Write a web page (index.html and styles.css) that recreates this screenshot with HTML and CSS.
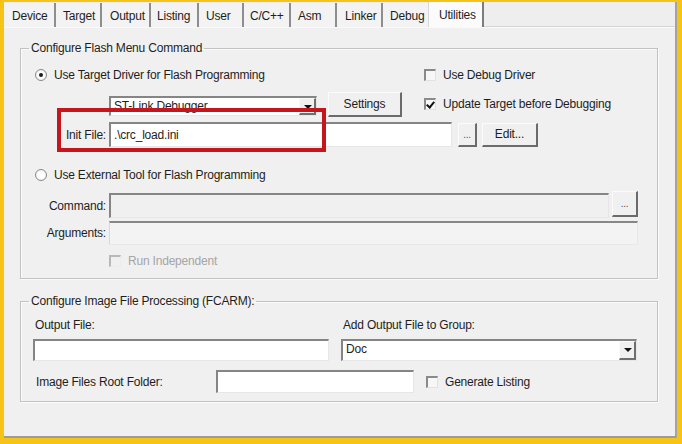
FILE: index.html
```html
<!DOCTYPE html>
<html lang="en">
  <head>
    <meta charset="UTF-8" />
    <title>Options for Target - Utilities</title>
    <link rel="stylesheet" href="styles.css">
  </head>
  <body>
    <div class="window">
      <!-- Tab strip -->
      <div class="tabs">
        <div class="tab">Device</div>
        <div class="tab">Target</div>
        <div class="tab">Output</div>
        <div class="tab">Listing</div>
        <div class="tab">User</div>
        <div class="tab">C/C++</div>
        <div class="tab">Asm</div>
        <div class="tab">Linker</div>
        <div class="tab">Debug</div>
        <div class="tab active">Utilities</div>
      </div>

      <div class="panel">
        <!-- Flash menu command group -->
        <fieldset class="group group-flash">
          <legend>Configure Flash Menu Command</legend>

          <div class="row row-1">
            <label class="radio-line">
              <span class="radio checked"></span>
              Use Target Driver for Flash Programming
            </label>
            <label class="check-line">
              <span class="checkbox"></span>
              Use Debug Driver
            </label>
          </div>

          <div class="row row-2">
            <div class="select select-driver">
              <span class="select-text">ST-Link Debugger</span>
              <span class="select-arrow"></span>
            </div>
            <button class="btn btn-settings">Settings</button>
            <label class="check-line">
              <span class="checkbox checked"></span>
              Update Target before Debugging
            </label>
          </div>

          <div class="row row-3">
            <span class="field-label">Init File:</span>
            <div class="edit edit-init">.\crc_load.ini</div>
            <button class="btn btn-dots">...</button>
            <button class="btn btn-edit">Edit...</button>
          </div>

          <div class="row row-4">
            <label class="radio-line">
              <span class="radio"></span>
              Use External Tool for Flash Programming
            </label>
          </div>

          <div class="row row-5">
            <span class="field-label">Command:</span>
            <div class="edit edit-command"></div>
            <button class="btn btn-dots btn-dots-wide">...</button>
          </div>

          <div class="row row-6">
            <span class="field-label">Arguments:</span>
            <div class="edit edit-args"></div>
          </div>

          <div class="row row-7">
            <label class="check-line disabled">
              <span class="checkbox"></span>
              Run Independent
            </label>
          </div>

          <!-- annotation box drawn over the driver/init file controls -->
          <div class="highlight"></div>
        </fieldset>

        <!-- Image file processing group -->
        <fieldset class="group group-image">
          <legend>Configure Image File Processing (FCARM):</legend>

          <div class="image-grid">
            <span class="grid-label">Output File:</span>
            <span class="grid-label">Add Output File to Group:</span>
            <div class="edit edit-output"></div>
            <div class="select select-group">
              <span class="select-text">Doc</span>
              <span class="select-arrow"></span>
            </div>
          </div>

          <div class="row row-root">
            <span class="root-label">Image Files Root Folder:</span>
            <div class="edit edit-root"></div>
            <label class="check-line">
              <span class="checkbox"></span>
              Generate Listing
            </label>
          </div>
        </fieldset>
      </div>
    </div>
  </body>
</html>
```

FILE: styles.css
```css
/* Reset */
* {
  box-sizing: border-box;
  margin: 0;
  padding: 0;
}
html,
body {
  height: 100%;
}
body {
  background: #f5c417;
  font-family: "Liberation Sans", Arial, sans-serif;
  font-size: 12px;
  letter-spacing: -0.2px;
  color: #1e1e1e;
  overflow: hidden;
}
/* Dialog page */
.window {
  margin: 2px 5px 0 4px;
  height: 436px;
  background: #f0f0f0;
  border-right: 2px solid #a3a3a3;
  border-bottom: 2px solid #9c9c9c;
  display: flex;
  flex-direction: column;
}
/* Tabs */
.tabs {
  display: flex;
  height: 25px;
  background: #eeeeee;
  border-bottom: 1px solid #d4d4d4;
  box-shadow: 0 1px 0 #fafafa;
}
.tab {
  height: 24px;
  margin-top: 1px;
  padding: 6px 0 0 7px;
  border-right: 2px solid #8e8e8e;
  background: #f3f3f3;
  white-space: nowrap;
}
.tab:nth-child(1) { width: 52px; padding-left: 8px; }
.tab:nth-child(2) { width: 46px; }
.tab:nth-child(3) { width: 49px; padding-left: 8px; }
.tab:nth-child(4) { width: 48px; padding-left: 6px; }
.tab:nth-child(5) { width: 45px; }
.tab:nth-child(6) { width: 47px; padding-left: 6px; }
.tab:nth-child(7) { width: 46px; }
.tab:nth-child(8) { width: 46px; padding-left: 8px; }
.tab:nth-child(9) { width: 45px; border-right: none; }
.tab.active {
  width: 56px;
  height: 25px;
  margin-top: 0;
  padding-left: 10px;
  background: #fbfbfb;
  border-left: 1px solid #d8d8d8;
  border-right: 2px solid #7c7c7c;
}
/* Tab panel */
.panel {
  flex: 1;
  padding: 0 0 0 16px;
}
.group {
  width: 638px;
  border: 1px solid #c2c2c2;
  box-shadow: inset 1px 1px 0 #fbfbfb, 1px 1px 0 #fbfbfb;
}
.group legend {
  margin-left: 8px;
  padding: 0 2px;
  line-height: 14px;
}
.group-flash {
  position: relative;
  margin-top: 14px;
  padding-bottom: 7px;
}
.group-image {
  margin-top: 15px;
  padding: 0 0 8px 0;
}
.row {
  display: flex;
  align-items: center;
}
.row-1 {
  height: 20px;
  margin-top: 10px;
  padding-left: 14px;
}
.row-1 .radio-line {
  width: 389px;
}
.row-2 {
  height: 26px;
  margin-top: 6px;
  padding-left: 88px;
}
.row-3 {
  height: 25px;
  margin-top: 5px;
}
.row-4 {
  height: 20px;
  margin-top: 18px;
  padding-left: 14px;
}
.row-5 {
  height: 27px;
  margin-top: 6px;
  align-items: flex-start;
}
.row-5 .field-label {
  margin-top: 8px;
}
.row-6 {
  height: 24px;
  margin-top: 3px;
}
.row-7 {
  height: 20px;
  margin-top: 6px;
  padding-left: 88px;
}
.field-label {
  width: 88px;
  text-align: right;
  padding-right: 3px;
  flex-shrink: 0;
}
/* Radio and check boxes */
.radio-line,
.check-line {
  display: flex;
  align-items: center;
  gap: 7px;
  white-space: nowrap;
}
.radio {
  width: 12px;
  height: 12px;
  border-radius: 50%;
  border: 1px solid #8a8a8a;
  background: radial-gradient(circle, #ffffff 40%, #e6e6e6 100%);
  position: relative;
  flex-shrink: 0;
}
.radio.checked::after {
  content: "";
  position: absolute;
  left: 3px;
  top: 3px;
  width: 4px;
  height: 4px;
  border-radius: 50%;
  background: #1c1c1c;
}
.checkbox {
  width: 12px;
  height: 12px;
  border-style: solid;
  border-width: 2px 1px 1px 2px;
  border-color: #8a8a8a #e2e2e2 #e2e2e2 #8a8a8a;
  background: #f7f7f7;
  position: relative;
  flex-shrink: 0;
}
.checkbox.checked::after {
  content: "";
  position: absolute;
  left: 2px;
  top: 0;
  width: 3px;
  height: 6px;
  border-right: 2px solid #111;
  border-bottom: 2px solid #111;
  transform: rotate(40deg);
}
.check-line.disabled {
  color: #a5a5a5;
}
.check-line.disabled .checkbox {
  border-color: #b8b8b8 #ececec #ececec #b8b8b8;
  background: #f0f0f0;
}
/* Edit fields */
.edit {
  height: 23px;
  background: #fff;
  border-style: solid;
  border-width: 2px 1px 1px 2px;
  border-color: #858585 #e6e6e6 #e6e6e6 #858585;
  padding: 3px 0 0 3px;
  white-space: nowrap;
}
.edit-init {
  width: 343px;
  height: 25px;
  padding-top: 4px;
}
.edit-command {
  width: 500px;
  height: 25px;
  margin-top: 2px;
  background: #f0f0f0;
}
.edit-args {
  width: 529px;
  height: 24px;
  background: #f3f3f3;
  border-color: #878787 #e8e8e8 #e8e8e8 #d9d9d9;
  border-width: 2px 1px 1px 1px;
}
.edit-output {
  height: 22px;
}
.edit-root {
  width: 198px;
  height: 23px;
}
/* Drop-down lists */
.select {
  display: flex;
  height: 20px;
  background: #fff;
  border-style: solid;
  border-width: 2px 1px 1px 2px;
  border-color: #858585 #e6e6e6 #e6e6e6 #858585;
}
.select-text {
  flex: 1;
  padding: 1px 0 0 3px;
}
.select-arrow {
  width: 17px;
  background: #f0f0f0;
  border-style: solid;
  border-width: 1px 2px 2px 1px;
  border-color: #fafafa #6f6f6f #6f6f6f #fafafa;
  position: relative;
}
.select-arrow::after {
  content: "";
  position: absolute;
  left: 4px;
  top: 6px;
  border-left: 4px solid transparent;
  border-right: 4px solid transparent;
  border-top: 4px solid #111;
}
.select-driver {
  width: 208px;
  margin-top: 3px;
}
.select-group {
  height: 22px;
}
/* Buttons */
.btn {
  font-family: inherit;
  font-size: 12px;
  letter-spacing: -0.2px;
  color: #1e1e1e;
  background: #f0f0f0;
  border-style: solid;
  border-width: 1px 2px 2px 1px;
  border-color: #fbfbfb #6b6b6b #6b6b6b #fbfbfb;
  flex-shrink: 0;
}
.btn-settings {
  width: 74px;
  height: 25px;
  margin: 0 22px 0 11px;
}
.btn-dots {
  width: 19px;
  height: 24px;
  margin-left: 6px;
  font-size: 10px;
  color: #555;
}
.btn-dots-wide {
  width: 26px;
  height: 26px;
  margin-left: 3px;
}
.btn-edit {
  width: 56px;
  height: 24px;
  margin-left: 5px;
}
/* Red annotation frame */
.highlight {
  position: absolute;
  left: 36px;
  top: 53px;
  width: 269px;
  height: 44px;
  border: 4px solid #c4161c;
  pointer-events: none;
}
/* Image file group */
.image-grid {
  display: grid;
  grid-template-columns: 296px 296px;
  column-gap: 12px;
  row-gap: 6px;
  padding-left: 12px;
  margin-top: 9px;
}
.grid-label {
  height: 16px;
  padding-left: 2px;
  line-height: 16px;
}
.row-root {
  height: 23px;
  margin-top: 9px;
  padding-left: 15px;
}
.root-label {
  width: 180px;
}
.row-root .check-line {
  margin-left: 12px;
}
```
